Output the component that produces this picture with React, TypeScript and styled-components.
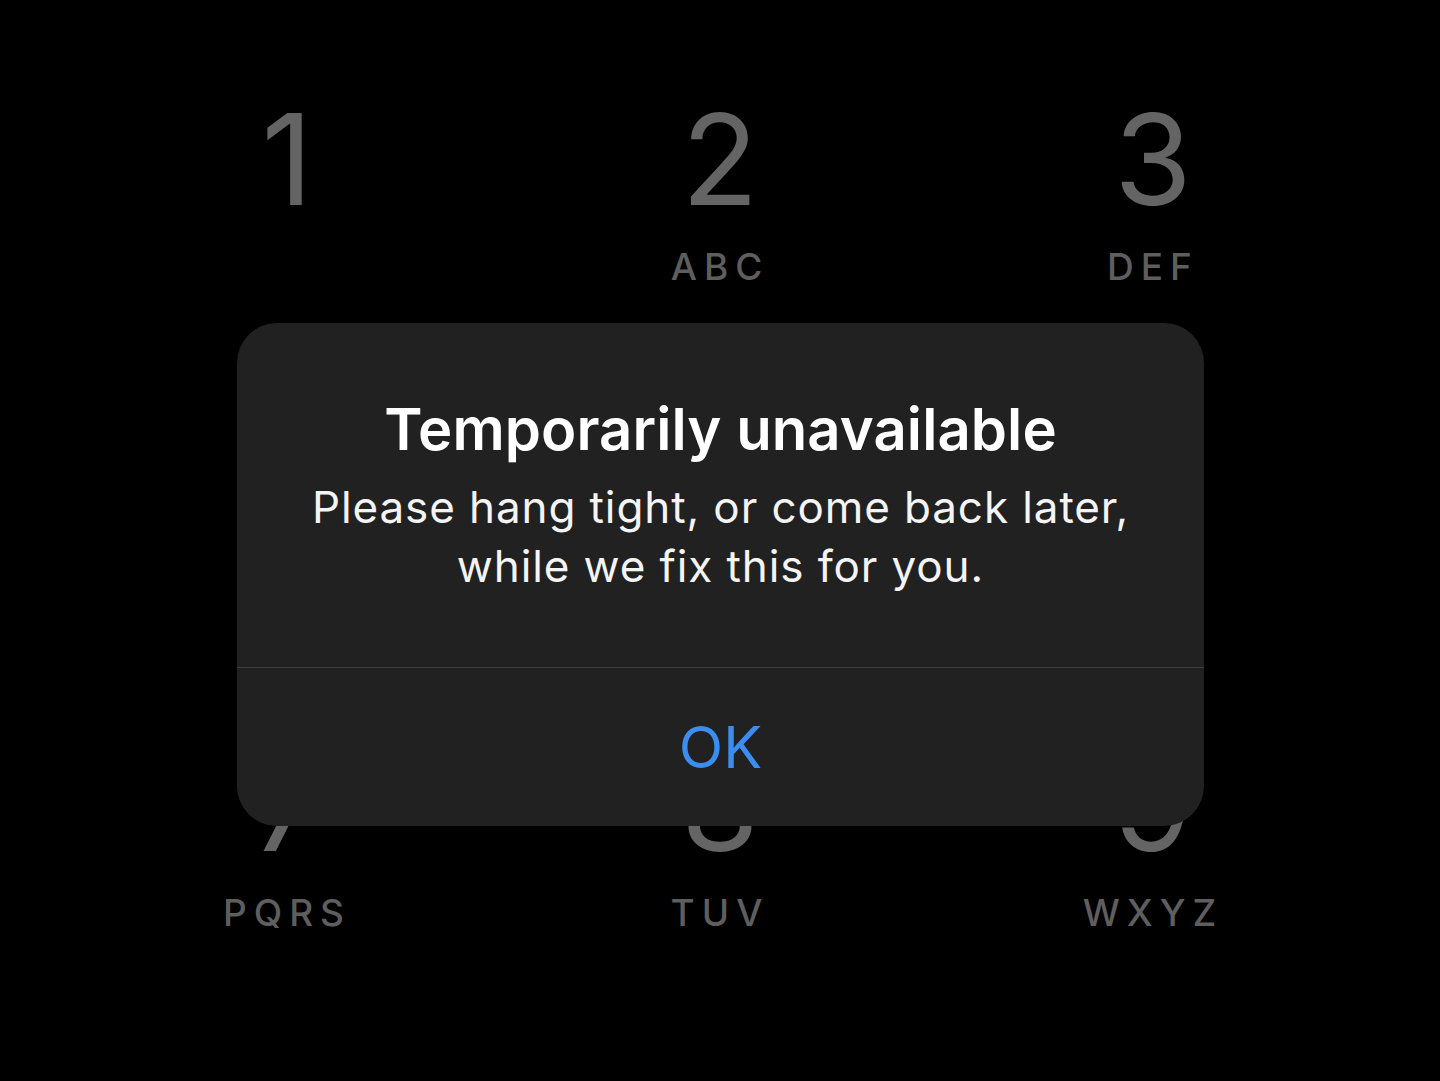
import React from "react";
import styled, { createGlobalStyle } from "styled-components";

const GlobalStyle = createGlobalStyle`
  html, body {
    margin: 0;
    padding: 0;
    background: #000;
    height: 1081px;
    overflow: hidden;
  }
  body {
    font-family: Inter, "Noto Sans", "Liberation Sans", sans-serif;
    -webkit-font-smoothing: antialiased;
  }
`;

const Screen = styled.main`
  position: relative;
  width: 1440px;
  height: 1081px;
  background: #000;
  overflow: hidden;
`;

const Keypad = styled.div`
  display: grid;
  grid-template-columns: repeat(3, 433px);
  row-gap: 133px;
  justify-content: center;
  padding-top: 96px;
`;

const Key = styled.div`
  display: flex;
  flex-direction: column;
  align-items: center;
  gap: 26px;
`;

const Digit = styled.span`
  font-size: 126px;
  line-height: 126px;
  font-weight: 400;
  color: #646464;
`;

const Letters = styled.span`
  height: 38px;
  font-size: 37px;
  line-height: 38px;
  font-weight: 500;
  letter-spacing: 7px;
  color: #5e5e5e;
`;

const Alert = styled.section`
  position: absolute;
  left: 237px;
  top: 323px;
  width: 967px;
  height: 503px;
  display: flex;
  flex-direction: column;
  background: #212121;
  border-radius: 40px;
  overflow: hidden;
`;

const AlertBody = styled.div`
  display: flex;
  flex-direction: column;
  align-items: center;
  padding: 71px 40px 71px;
  border-bottom: 1.5px solid #3e3e3e;
  text-align: center;
`;

const Title = styled.h2`
  margin: 0;
  font-size: 58px;
  line-height: 70px;
  font-weight: 600;
  letter-spacing: 0.1px;
  color: #fff;
`;

const Message = styled.p`
  margin: 14px 0 0;
  font-size: 44px;
  line-height: 59px;
  font-weight: 400;
  letter-spacing: 0.9px;
  color: #f4f4f4;
`;

const ActionButton = styled.button`
  flex: 1;
  border: 0;
  background: transparent;
  font-family: inherit;
  font-size: 58px;
  font-weight: 400;
  color: #3b8ef0;
  cursor: pointer;
`;

const keys: { digit: string; letters: string }[] = [
  { digit: "1", letters: "" },
  { digit: "2", letters: "ABC" },
  { digit: "3", letters: "DEF" },
  { digit: "4", letters: "GHI" },
  { digit: "5", letters: "JKL" },
  { digit: "6", letters: "MNO" },
  { digit: "7", letters: "PQRS" },
  { digit: "8", letters: "TUV" },
  { digit: "9", letters: "WXYZ" },
  { digit: "*", letters: "" },
  { digit: "0", letters: "+" },
  { digit: "#", letters: "" },
];

export default function App() {
  return (
    <>
      <GlobalStyle />
      <Screen>
        <Keypad>
          {keys.map((k) => (
            <Key key={k.digit}>
              <Digit>{k.digit}</Digit>
              <Letters>{k.letters}</Letters>
            </Key>
          ))}
        </Keypad>
        <Alert role="alertdialog">
          <AlertBody>
            <Title>Temporarily unavailable</Title>
            <Message>
              Please hang tight, or come back later,
              <br />
              while we fix this for you.
            </Message>
          </AlertBody>
          <ActionButton>OK</ActionButton>
        </Alert>
      </Screen>
    </>
  );
}
